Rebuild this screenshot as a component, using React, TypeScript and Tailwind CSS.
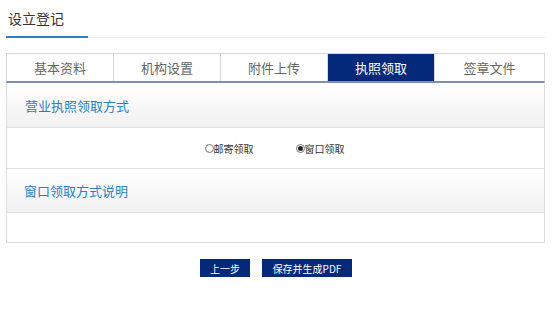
import React, { useState } from "react";

const tabs = ["基本资料", "机构设置", "附件上传", "执照领取", "签章文件"];

const font = { fontFamily: '"Microsoft YaHei", "Noto Sans CJK SC", sans-serif' };

function Radio({ checked, label, onClick }: { checked: boolean; label: string; onClick: () => void }) {
  return (
    <label className="flex items-center cursor-pointer text-[10px] text-[#333]" onClick={onClick}>
      <span className="w-[9px] h-[9px] rounded-full border border-[#777] bg-white flex items-center justify-center">
        {checked && <span className="w-[5px] h-[5px] rounded-full bg-[#222]" />}
      </span>
      {label}
    </label>
  );
}

export default function App() {
  const [active] = useState(3);
  const [mode, setMode] = useState("window");

  return (
    <div className="w-[554px] h-[319px] bg-white" style={font}>
      <div className="ml-[6px] w-[539px]">
        <div className="h-[36px] flex items-center pl-[2px] text-[14px] text-[#333]">设立登记</div>
        <div className="flex h-[2px]">
          <div className="w-[82px] bg-[#2f7fc7]" />
          <div className="flex-1 mt-[1px] h-[1px] bg-[#e3eef8]" />
        </div>

        <div className="mt-[15px] flex border-t border-l border-r border-[#d6d6d6] border-b-2 border-b-[#7d90b3]">
          {tabs.map((t, i) => (
            <div
              key={t}
              className={
                "h-[27px] flex items-center justify-center text-[13px] " +
                (i < tabs.length - 1 ? "border-r border-[#d6d6d6] " : "") +
                (i === active ? "bg-[#04297a] text-white w-[107px]" : "text-[#666] ") +
                (i === 0 ? "w-[107px]" : i === 4 ? "flex-1" : i !== active ? "w-[107px]" : "")
              }
            >
              {t}
            </div>
          ))}
        </div>

        <div className="mt-[1px] border-l border-r border-b border-[#dcdcdc]">
          <div className="h-[44px] flex items-center pl-[18px] text-[13px] text-[#2b7ec6] bg-gradient-to-b from-white to-[#f1f1f1] border-b border-[#e2e2e2]">
            营业执照领取方式
          </div>
          <div className="h-[41px] flex items-center justify-center gap-[42px] pr-[2px] border-b border-[#e2e2e2]">
            <Radio checked={mode === "mail"} label="邮寄领取" onClick={() => setMode("mail")} />
            <Radio checked={mode === "window"} label="窗口领取" onClick={() => setMode("window")} />
          </div>
          <div className="h-[44px] flex items-center pl-[17px] text-[13px] text-[#2b7ec6] bg-gradient-to-b from-white to-[#f1f1f1] border-b border-[#e2e2e2]">
            窗口领取方式说明
          </div>
          <div className="h-[29px]" />
        </div>

        <div className="mt-[16px] flex justify-center gap-[12px] pl-[1px]">
          <button className="w-[50px] h-[18px] bg-[#04297a] text-white text-[10px] flex items-center justify-center">上一步</button>
          <button className="w-[90px] h-[18px] bg-[#04297a] text-white text-[10px] flex items-center justify-center">保存并生成PDF</button>
        </div>
      </div>
    </div>
  );
}
